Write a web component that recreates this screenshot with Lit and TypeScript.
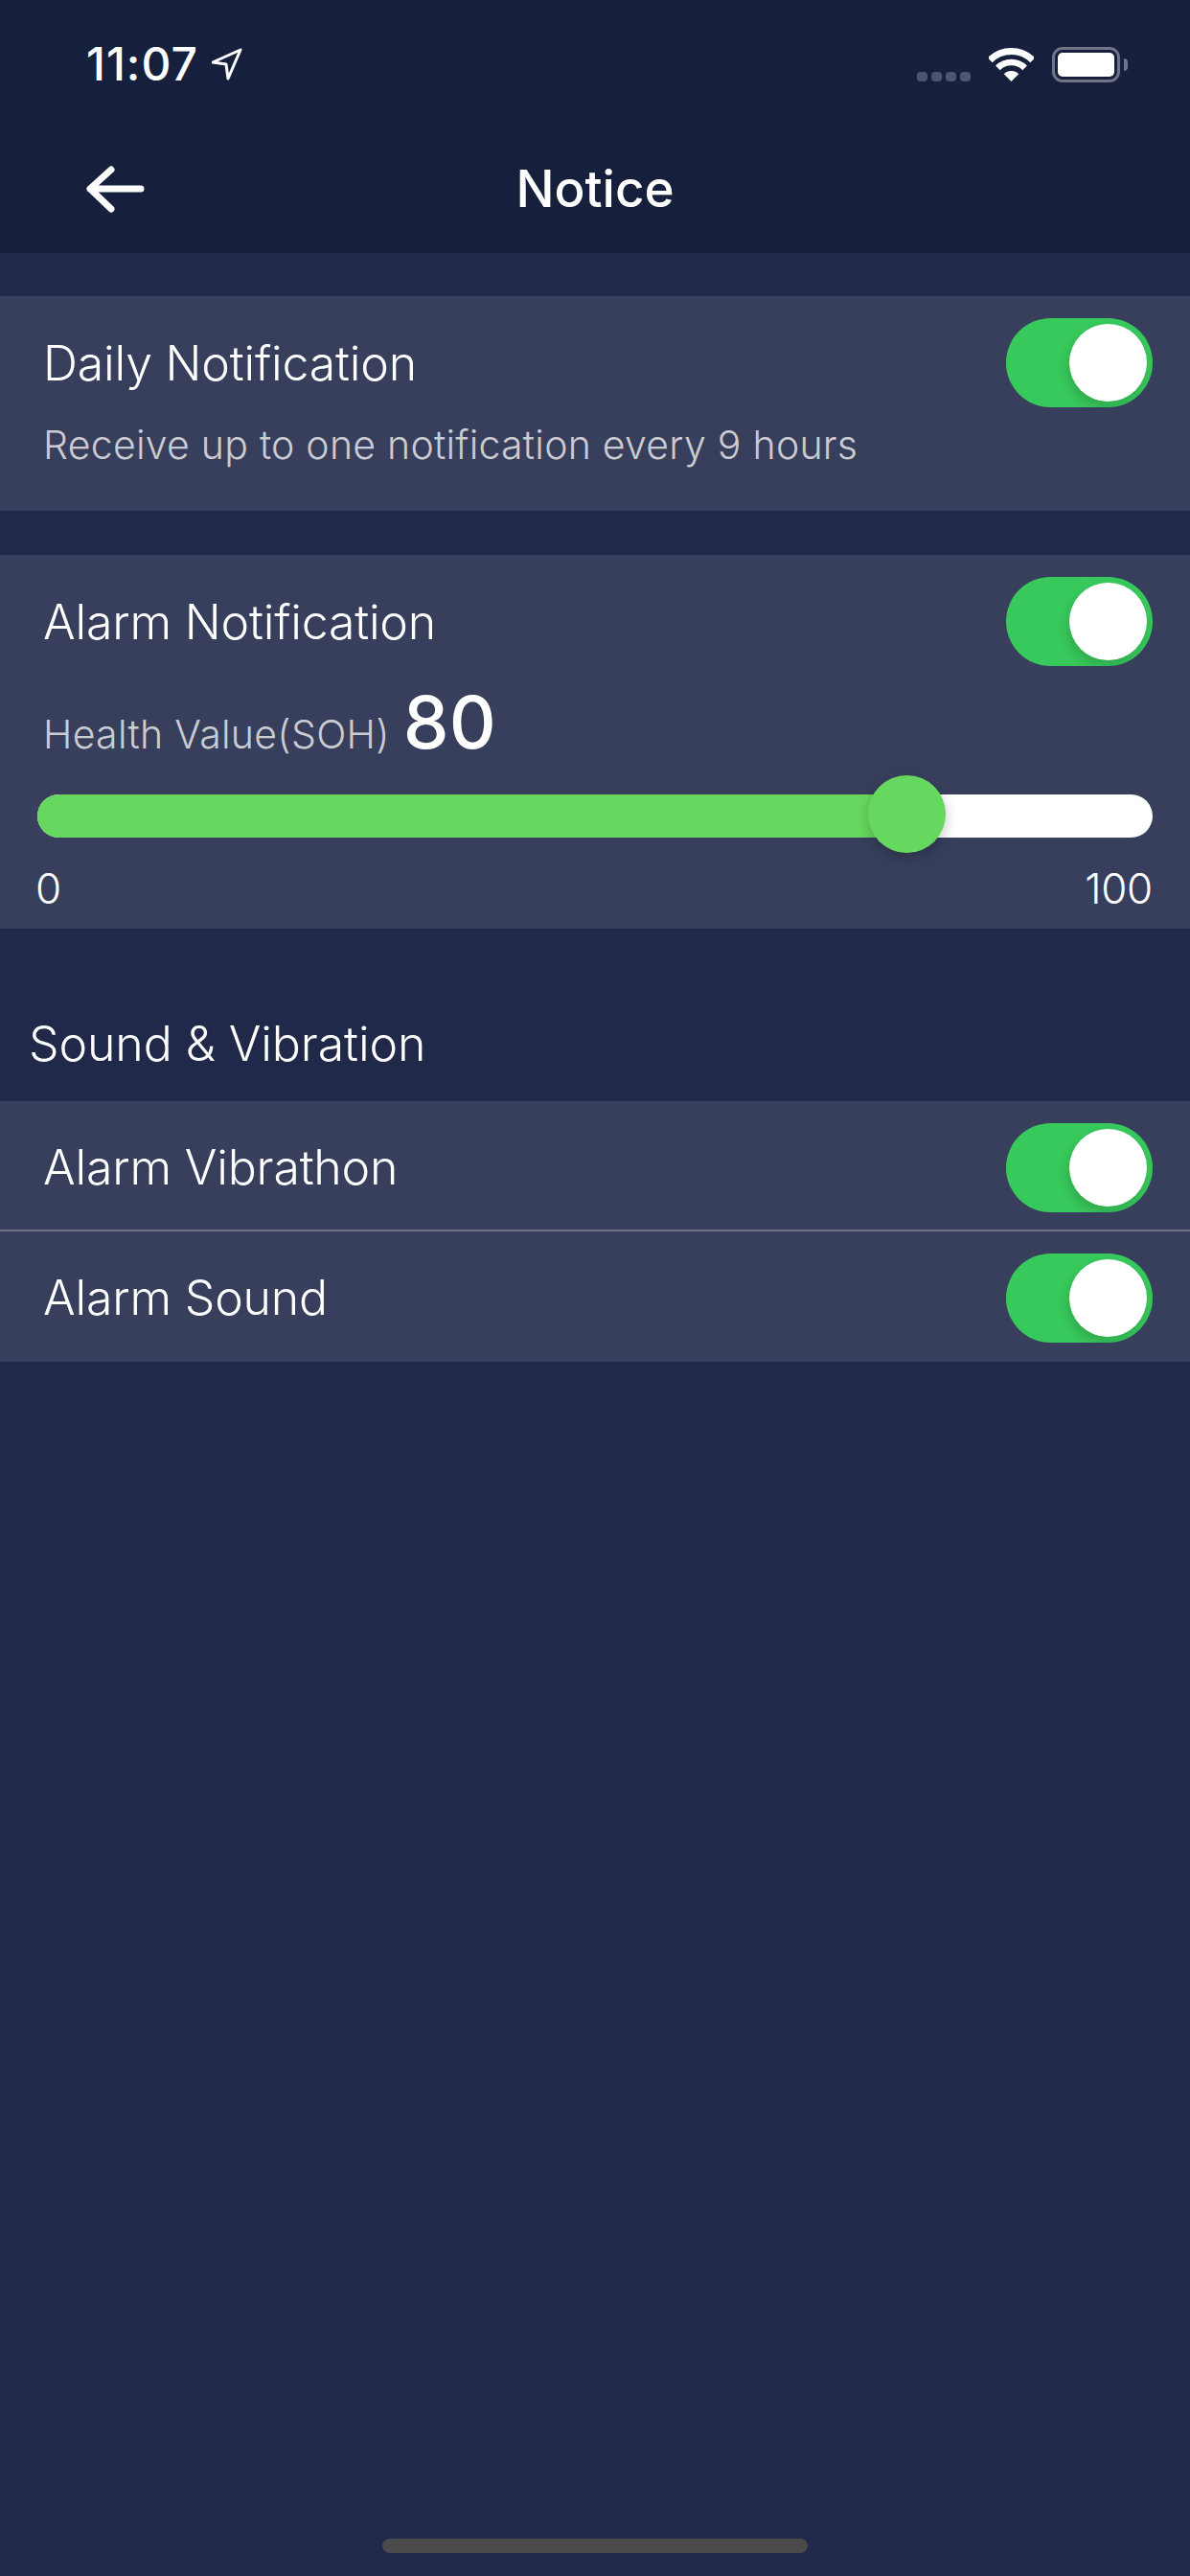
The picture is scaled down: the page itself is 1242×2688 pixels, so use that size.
import { LitElement, html, css, svg } from 'lit';
import { customElement, property } from 'lit/decorators.js';

@customElement('toggle-switch')
export class ToggleSwitch extends LitElement {
  static styles = css`
    :host {
      display: block;
      flex: none;
    }
    .track {
      width: 153px;
      height: 93px;
      border-radius: 47px;
      background: #38c95c;
      display: flex;
      justify-content: flex-end;
      align-items: center;
      padding: 0 6px;
      box-sizing: border-box;
      overflow: hidden;
    }
    .knob {
      width: 81px;
      height: 81px;
      border-radius: 50%;
      background: #fff;
      box-shadow: -2px 6px 12px rgba(0, 0, 0, 0.16);
    }
  `;

  render() {
    return html`<div class="track"><div class="knob"></div></div>`;
  }
}

@customElement('health-slider')
export class HealthSlider extends LitElement {
  @property({ type: Number }) value = 80;

  static styles = css`
    :host {
      display: block;
    }
    .track {
      position: relative;
      height: 45px;
      border-radius: 23px;
      background: #fff;
    }
    .fill {
      height: 100%;
      border-radius: 23px 0 0 23px;
      background: #67d85f;
    }
    .thumb {
      position: absolute;
      top: -20px;
      width: 81px;
      height: 81px;
      border-radius: 50%;
      background: #67d85f;
      box-shadow: 0 5px 14px rgba(0, 0, 0, 0.22);
    }
  `;

  render() {
    return html`
      <div class="track">
        <div class="fill" style="width: ${this.value}%"></div>
        <div class="thumb" style="left: calc(${this.value}% - 64px)"></div>
      </div>
    `;
  }
}

const backArrow = svg`<path d="M147 197H94M116 177L94 197L116 218" />`;

@customElement('app-root')
export class AppRoot extends LitElement {
  static styles = css`
    :host {
      display: flex;
      flex-direction: column;
      width: 1242px;
      height: 2688px;
      background: #20294a;
      color: #fff;
      font-family: 'Inter', 'Roboto', sans-serif;
      font-weight: 300;
    }

    header {
      height: 264px;
      background: #161f3b;
      flex: none;
    }
    .status {
      display: flex;
      align-items: center;
      height: 134px;
      padding: 0 65px 0 90px;
      box-sizing: border-box;
    }
    .time {
      font-size: 48px;
      font-weight: 500;
      letter-spacing: 1px;
      line-height: 134px;
    }
    .locate {
      width: 32px;
      height: 34px;
      margin-left: 14px;
      fill: none;
      stroke: #fff;
      stroke-width: 3;
      stroke-linejoin: round;
    }
    .status-right {
      margin-left: auto;
      display: flex;
      align-items: flex-end;
      height: 37px;
      margin-top: 1px;
    }
    .dots {
      display: flex;
      gap: 4px;
      margin-right: 19px;
      margin-bottom: 1px;
    }
    .dots i {
      width: 11px;
      height: 10px;
      border-radius: 4px;
      background: #4f556e;
    }
    .wifi {
      width: 47px;
      height: 35px;
      margin-right: 19px;
      margin-bottom: 1px;
    }
    .battery {
      width: 71px;
      height: 37px;
      box-sizing: border-box;
      border: 3px solid #6f7488;
      border-radius: 11px;
      padding: 3px;
      display: flex;
    }
    .battery i {
      flex: 1;
      background: #fff;
      border-radius: 5px;
    }
    .nub {
      width: 4px;
      height: 13px;
      margin: 0 0 12px 4px;
      border-radius: 0 4px 4px 0;
      background: #6f7488;
    }

    .nav {
      position: relative;
      height: 130px;
      display: flex;
      align-items: center;
      justify-content: center;
    }
    .back {
      position: absolute;
      left: 0;
      top: -134px;
      width: 200px;
      height: 264px;
      fill: none;
      stroke: #fff;
      stroke-width: 7;
      stroke-linecap: round;
      stroke-linejoin: round;
    }
    .nav h1 {
      margin: 0 0 5px;
      font-size: 53px;
      font-weight: 500;
      letter-spacing: 0;
    }

    .card {
      background: #383f5c;
    }
    .card-daily {
      margin-top: 45px;
      height: 224px;
    }
    .card-alarm {
      margin-top: 46px;
      height: 390px;
    }
    .row {
      display: flex;
      align-items: center;
      justify-content: space-between;
      height: 93px;
      padding: 23px 39px 0 45px;
    }
    .row-title {
      font-size: 50px;
      letter-spacing: -0.2px;
    }
    .hint {
      padding: 14px 45px 0;
      font-size: 41px;
      letter-spacing: 0.25px;
      color: #cbccd2;
    }
    .health {
      display: flex;
      align-items: baseline;
      gap: 14px;
      padding: 0 45px;
      margin-top: 12px;
      height: 122px;
      color: #cbccd2;
      font-size: 41px;
      letter-spacing: 0.3px;
    }
    .health b {
      font-size: 76px;
      font-weight: 500;
      color: #fff;
      letter-spacing: 0;
    }
    health-slider {
      margin: 0 39px;
    }
    .scale {
      display: flex;
      justify-content: space-between;
      padding: 26px 39px 0 37px;
      font-size: 44px;
      letter-spacing: -0.3px;
    }

    .section-title {
      height: 180px;
      box-sizing: border-box;
      padding: 90px 30px 0;
      font-size: 50px;
      letter-spacing: -0.1px;
    }
    .sound-row {
      height: 130px;
      padding: 4px 39px 0 45px;
    }
    .sound-row + .sound-row {
      height: 134px;
      padding-top: 2px;
      border-top: 2px solid #6f7488;
    }

    .spacer {
      flex: 1;
    }
    .home {
      width: 444px;
      height: 15px;
      margin: 0 auto 24px;
      border-radius: 8px;
      background: #4a4a4a;
    }
  `;

  render() {
    return html`
      <header>
        <div class="status">
          <span class="time">11:07</span>
          <svg class="locate" viewBox="0 0 32 34"><path d="M30 2L1 15L15 17L17 32Z" /></svg>
          <div class="status-right">
            <div class="dots"><i></i><i></i><i></i><i></i></div>
            <svg class="wifi" viewBox="0 0 47 35">
              <path d="M1.23 12.73A31.5 31.5 0 0 1 45.77 12.73" fill="none" stroke="#fff" stroke-width="7" />
              <path d="M9.36 20.86A20 20 0 0 1 37.64 20.86" fill="none" stroke="#fff" stroke-width="6.5" />
              <path d="M23.5 35L15.72 27.22A11 11 0 0 1 31.28 27.22Z" fill="#fff" />
            </svg>
            <div class="battery"><i></i></div>
            <div class="nub"></div>
          </div>
        </div>
        <div class="nav">
          <svg class="back" viewBox="0 0 200 264">${backArrow}</svg>
          <h1>Notice</h1>
        </div>
      </header>

      <section class="card card-daily">
        <div class="row">
          <span class="row-title">Daily Notification</span>
          <toggle-switch></toggle-switch>
        </div>
        <div class="hint">Receive up to one notification every 9 hours</div>
      </section>

      <section class="card card-alarm">
        <div class="row">
          <span class="row-title">Alarm Notification</span>
          <toggle-switch></toggle-switch>
        </div>
        <div class="health">Health Value(SOH) <b>80</b></div>
        <health-slider value="80"></health-slider>
        <div class="scale"><span>0</span><span>100</span></div>
      </section>

      <div class="section-title">Sound &amp; Vibration</div>

      <section class="card">
        <div class="row sound-row">
          <span class="row-title">Alarm Vibrathon</span>
          <toggle-switch></toggle-switch>
        </div>
        <div class="row sound-row">
          <span class="row-title">Alarm Sound</span>
          <toggle-switch></toggle-switch>
        </div>
      </section>

      <div class="spacer"></div>
      <div class="home"></div>
    `;
  }
}
